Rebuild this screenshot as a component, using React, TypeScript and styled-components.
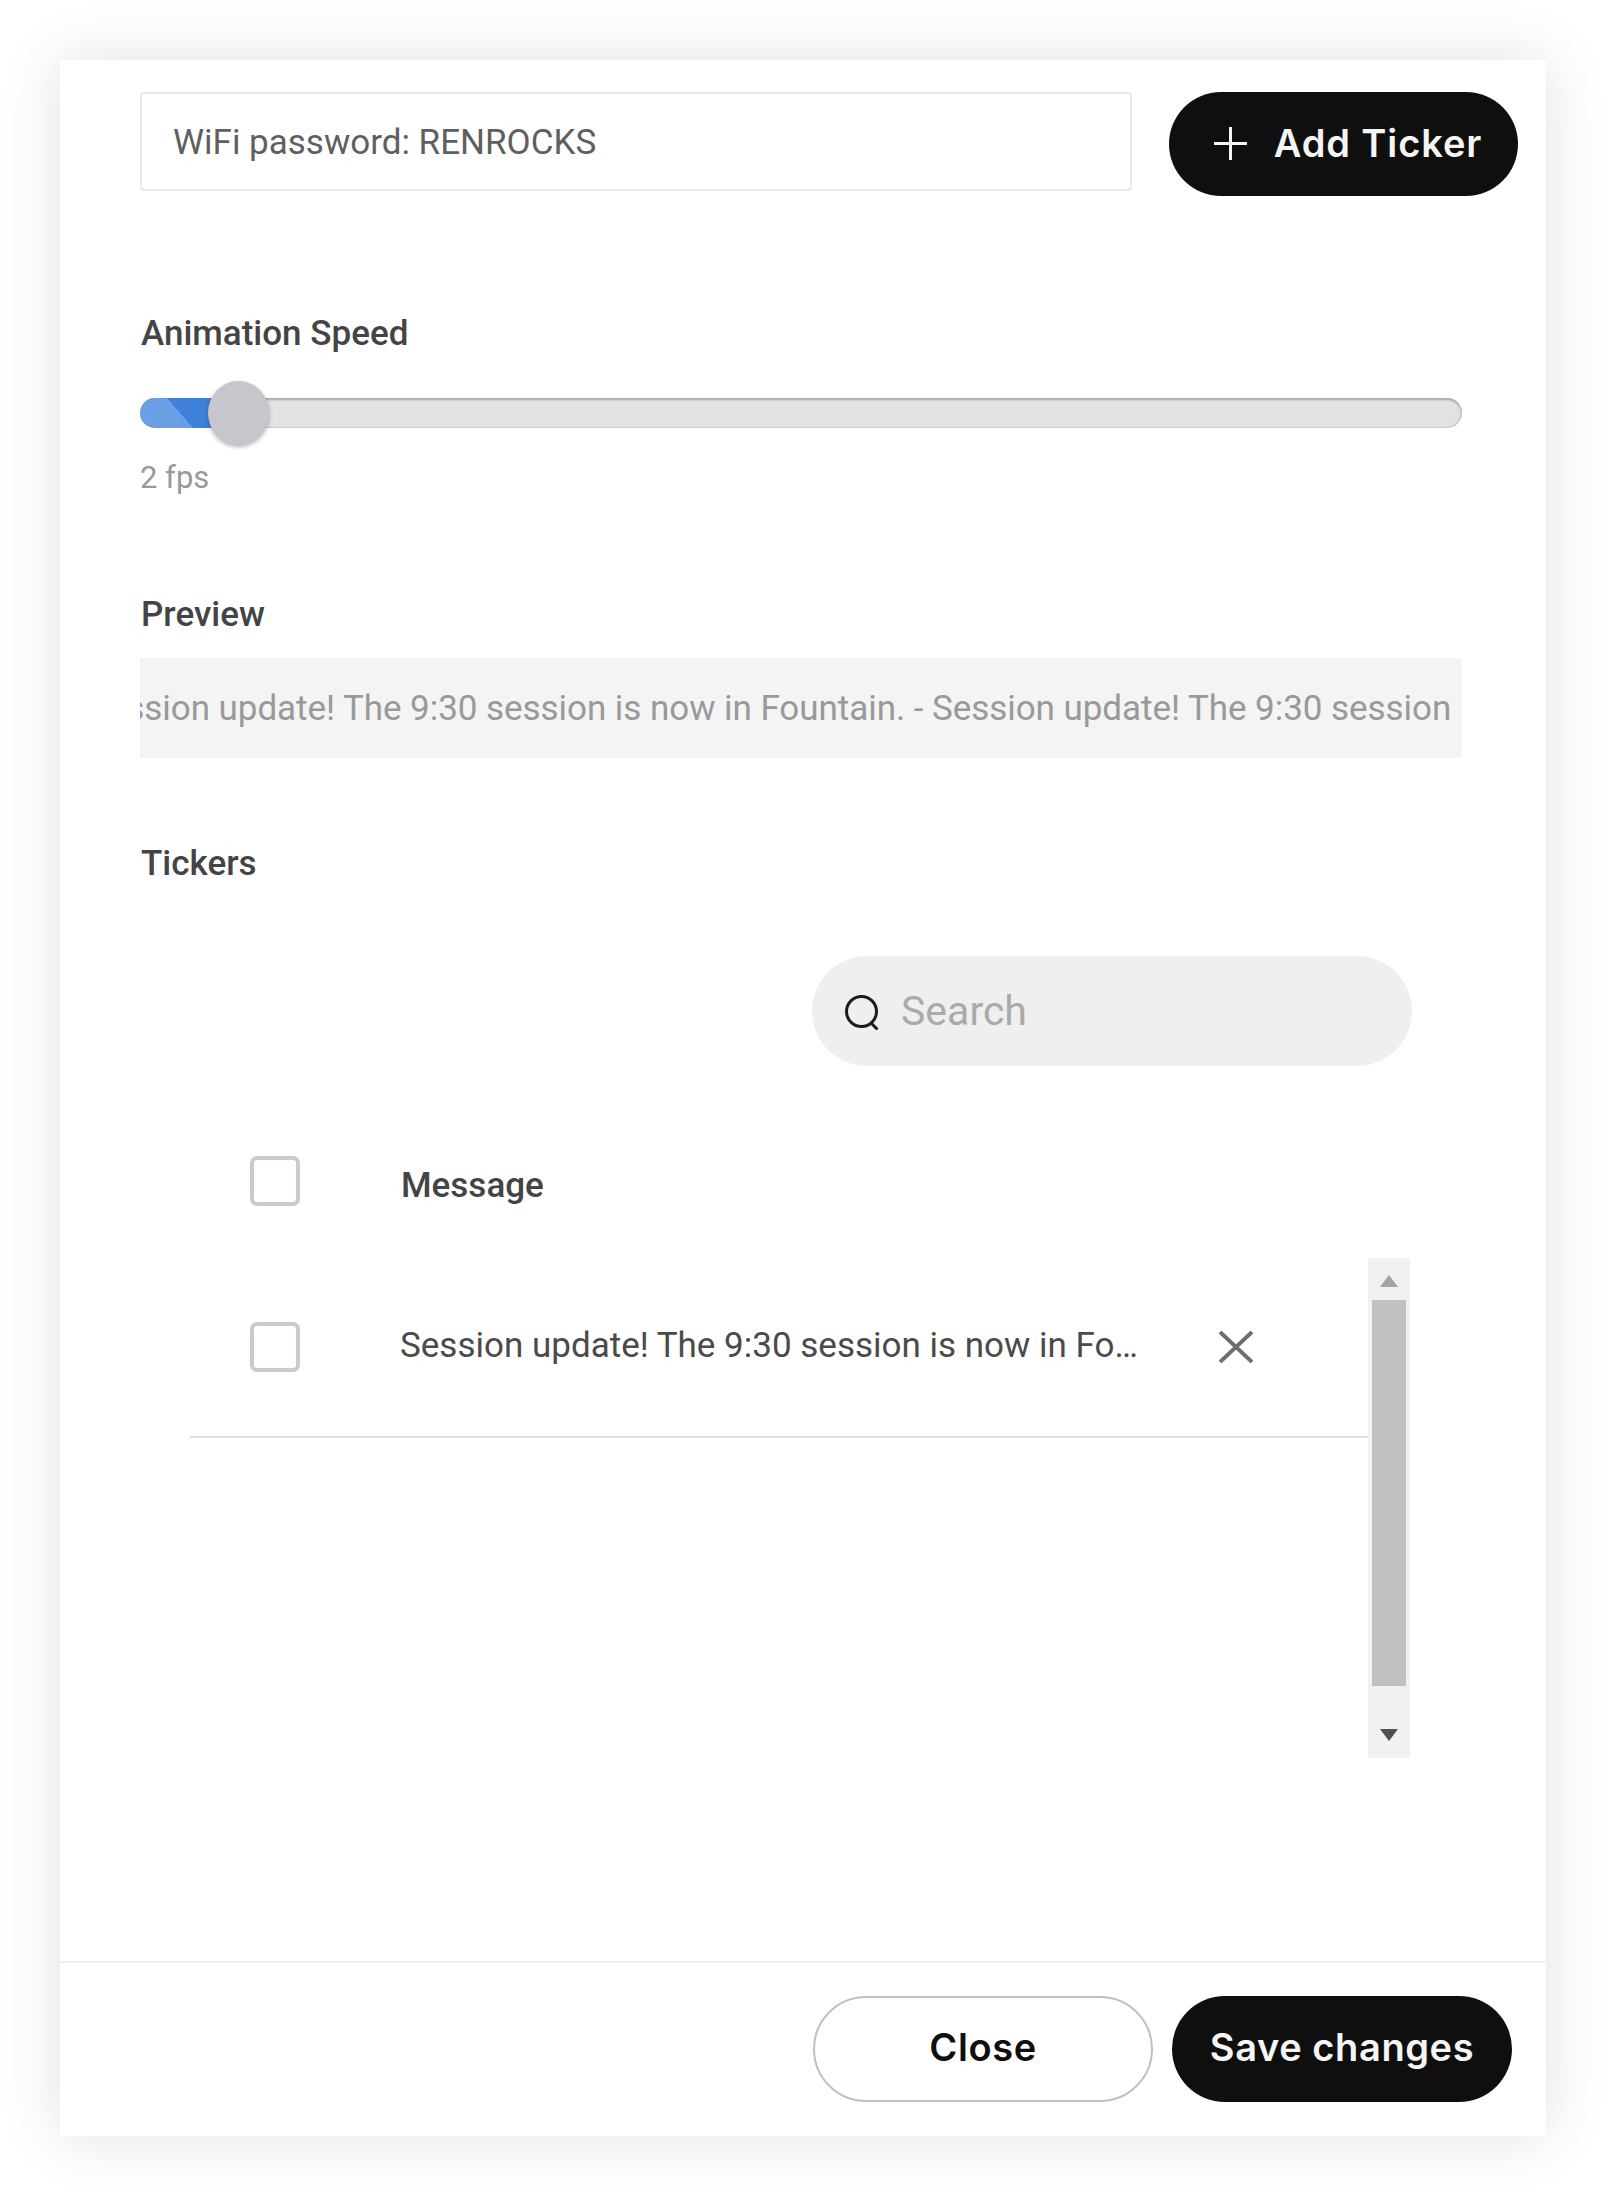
import React from 'react';
import styled, { createGlobalStyle } from 'styled-components';

const GlobalStyle = createGlobalStyle`
  html, body {
    margin: 0;
    padding: 0;
    background: #fff;
  }
  * {
    box-sizing: border-box;
  }
`;

const Page = styled.div`
  width: 1606px;
  height: 2196px;
  padding: 60px;
  font-family: Roboto, 'Liberation Sans', sans-serif;
`;

const Modal = styled.div`
  width: 1486px;
  height: 2076px;
  background: #fff;
  box-shadow: 0 0 60px rgba(0, 0, 0, 0.12);
  display: flex;
  flex-direction: column;
`;

const Body = styled.div`
  flex: 1;
  padding: 32px 28px 0 80px;
`;

const TopRow = styled.div`
  display: flex;
  align-items: flex-start;
  gap: 37px;
`;

const TextBox = styled.div`
  width: 992px;
  height: 99px;
  border: 2px solid #e6e9ef;
  border-radius: 4px;
  padding: 2px 0 0 31px;
  display: flex;
  align-items: center;
  font-size: 35px;
  color: #5f5f5f;
`;

const PillButton = styled.button<{ $outline?: boolean; $width: number; $tracking: number }>`
  width: ${(p) => p.$width}px;
  height: 106px;
  border-radius: 53px;
  border: ${(p) => (p.$outline ? '2px solid #c0c0c0' : 'none')};
  background: ${(p) => (p.$outline ? '#fff' : '#0f0f0f')};
  color: ${(p) => (p.$outline ? '#0f0f0f' : '#f5f5f5')};
  font-family: Inter, sans-serif;
  font-weight: 600;
  font-size: 38px;
  letter-spacing: ${(p) => p.$tracking}px;
  display: flex;
  align-items: center;
  justify-content: center;
  gap: 27px;
  padding: 0 0 4px;
`;

const AddButton = styled(PillButton)`
  height: 104px;
  padding: 0 0 2px 9px;
`;

const Section = styled.section<{ $top: number }>`
  margin-top: ${(p) => p.$top}px;
`;

const Label = styled.div`
  font-size: 35px;
  font-weight: 500;
  line-height: 42px;
  padding-left: 1px;
  color: #444;
`;

const SliderTrack = styled.div`
  position: relative;
  width: 1322px;
  height: 30px;
  margin-top: 43px;
  border-radius: 15px;
  background: #e2e2e2;
  box-shadow: inset 0 3px 2px -1px #a8a8a8, inset 0 -1px 1px #ccc, inset -2px 0 2px #ccc;
`;

const SliderFill = styled.div`
  width: 80px;
  height: 100%;
  border-radius: 15px 0 0 15px;
  background: linear-gradient(49deg, #6a9fe4 50%, #3f80d8 50%);
`;

const SliderThumb = styled.div`
  position: absolute;
  left: 68px;
  top: -17px;
  width: 61px;
  height: 64px;
  border-radius: 50%;
  background: #c6c6cc;
  box-shadow: 0 2px 4px rgba(0, 0, 0, 0.3);
`;

const Hint = styled.div`
  margin-top: 31px;
  font-size: 31px;
  line-height: 38px;
  color: #999;
`;

const PreviewBox = styled.div`
  width: 1322px;
  height: 100px;
  margin-top: 22px;
  background: #f4f4f4;
  overflow: hidden;
  display: flex;
  align-items: center;
  font-size: 35px;
  letter-spacing: -0.05px;
  color: #999;
  white-space: nowrap;
`;

const PreviewText = styled.span`
  margin-left: -53px;
`;

const SearchRow = styled.div`
  display: flex;
  justify-content: flex-end;
  width: 1272px;
  margin-top: 71px;
`;

const SearchBox = styled.div`
  width: 600px;
  height: 110px;
  border-radius: 55px;
  background: #efefef;
  display: flex;
  align-items: center;
  gap: 21px;
  padding-left: 33px;
  font-size: 41px;
  color: #aaa;
`;

const SearchGlyph = styled.svg`
  margin-top: 3px;
`;

const HeaderRow = styled.div`
  display: flex;
  align-items: center;
  width: 1228px;
  height: 60px;
  margin-top: 85px;
  margin-left: 50px;
  padding-left: 60px;
`;

const Checkbox = styled.div`
  width: 50px;
  height: 50px;
  flex: none;
  border: 4px solid #c9cad0;
  border-radius: 7px;
`;

const MessageHead = styled.div`
  margin-left: 101px;
  padding-top: 8px;
  font-size: 35px;
  font-weight: 500;
  color: #444;
`;

const TableBody = styled.div`
  display: flex;
  align-items: flex-start;
  margin: 47px 0 0 50px;
`;

const Rows = styled.div`
  width: 1178px;
`;

const TickerRow = styled.div`
  display: flex;
  align-items: center;
  height: 180px;
  padding-left: 60px;
  border-bottom: 2px solid #e0e0e0;
`;

const Message = styled.div`
  width: 742px;
  margin: 0 0 3px 100px;
  font-size: 35px;
  color: #4a4a4a;
  white-space: nowrap;
  overflow: hidden;
  text-overflow: ellipsis;
`;

const RemoveButton = styled.div`
  margin-left: 77px;
  display: flex;
  color: #6e6e6e;
`;

const Scrollbar = styled.div`
  width: 42px;
  height: 500px;
  background: #f1f1f1;
  display: flex;
  flex-direction: column;
  align-items: center;
  padding: 17px 0;
`;

const ScrollThumb = styled.div`
  width: 34px;
  height: 386px;
  margin: 13px 0 auto;
  background: #c1c1c1;
`;

const Arrow = styled.div<{ $down?: boolean }>`
  width: 0;
  height: 0;
  border-left: 9px solid transparent;
  border-right: 9px solid transparent;
  ${(p) =>
    p.$down ? 'border-top: 12px solid #505050;' : 'border-bottom: 12px solid #a3a3a3;'}
`;

const Footer = styled.div`
  height: 175px;
  border-top: 2px solid #efefef;
  display: flex;
  justify-content: flex-end;
  align-items: flex-start;
  gap: 19px;
  padding: 33px 34px 0 0;
`;

const PlusIcon = () => (
  <svg width="33" height="33" viewBox="0 0 33 33" fill="none" stroke="#f5f5f5" strokeWidth="3">
    <path d="M16.5 0v33M0 16.5h33" />
  </svg>
);

const SearchIcon = () => (
  <SearchGlyph width="35" height="35" viewBox="0 0 35 35" fill="none" stroke="#1c1c1c" strokeWidth="3">
    <circle cx="16.5" cy="16.5" r="15" />
    <path d="M26.5 28.5l6 6" />
  </SearchGlyph>
);

const CloseIcon = () => (
  <svg width="34" height="32" viewBox="0 0 34 32" fill="none" stroke="currentColor" strokeWidth="4">
    <path d="M1 1l32 30M33 1L1 31" />
  </svg>
);

const App: React.FC = () => {
  return (
    <Page>
      <GlobalStyle />
      <Modal>
        <Body>
          <TopRow>
            <TextBox>WiFi password: RENROCKS</TextBox>
            <AddButton $width={349} $tracking={0.9}>
              <PlusIcon />
              Add Ticker
            </AddButton>
          </TopRow>

          <Section $top={117}>
            <Label>Animation Speed</Label>
            <SliderTrack>
              <SliderFill />
              <SliderThumb />
            </SliderTrack>
            <Hint>2 fps</Hint>
          </Section>

          <Section $top={97}>
            <Label>Preview</Label>
            <PreviewBox>
              <PreviewText>
                Session update! The 9:30 session is now in Fountain. - Session update! The 9:30 session
              </PreviewText>
            </PreviewBox>
          </Section>

          <Section $top={85}>
            <Label>Tickers</Label>
            <SearchRow>
              <SearchBox>
                <SearchIcon />
                Search
              </SearchBox>
            </SearchRow>
            <HeaderRow>
              <Checkbox />
              <MessageHead>Message</MessageHead>
            </HeaderRow>
            <TableBody>
              <Rows>
                <TickerRow>
                  <Checkbox />
                  <Message>Session update! The 9:30 session is now in Fountain.</Message>
                  <RemoveButton>
                    <CloseIcon />
                  </RemoveButton>
                </TickerRow>
              </Rows>
              <Scrollbar>
                <Arrow />
                <ScrollThumb />
                <Arrow $down />
              </Scrollbar>
            </TableBody>
          </Section>
        </Body>
        <Footer>
          <PillButton $outline $width={340} $tracking={0.6}>
            Close
          </PillButton>
          <PillButton $width={340} $tracking={0.6}>
            Save changes
          </PillButton>
        </Footer>
      </Modal>
    </Page>
  );
};

export default App;
